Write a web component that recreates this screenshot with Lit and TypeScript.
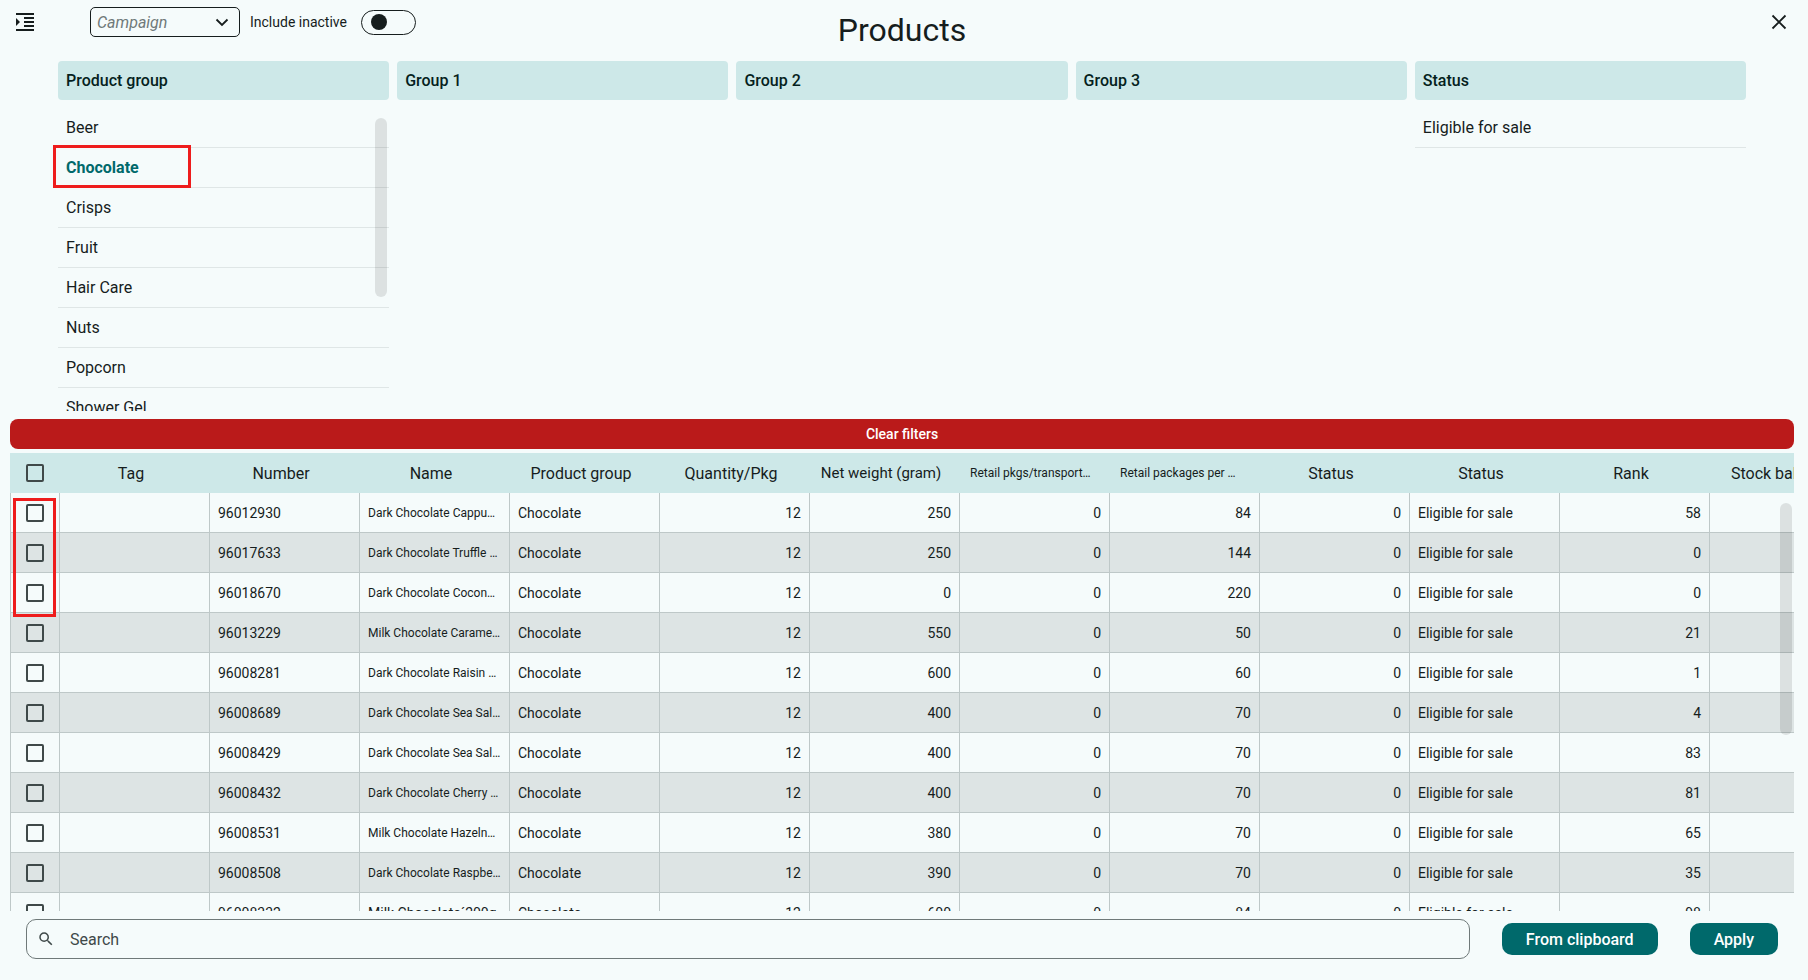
import { LitElement, html, css, svg } from "lit";
import { customElement, state } from "lit/decorators.js";
import { classMap } from "lit/directives/class-map.js";

type Kind = "text" | "number";

interface Column {
  title: string;
  kind: Kind;
  size?: "medium" | "small";
}

const COLUMNS: Column[] = [
  { title: "Tag", kind: "text" },
  { title: "Number", kind: "text" },
  { title: "Name", kind: "text" },
  { title: "Product group", kind: "text" },
  { title: "Quantity/Pkg", kind: "number" },
  { title: "Net weight (gram)", kind: "number", size: "medium" },
  { title: "Retail pkgs/transport…", kind: "number", size: "small" },
  { title: "Retail packages per …", kind: "number", size: "small" },
  { title: "Status", kind: "number" },
  { title: "Status", kind: "text" },
  { title: "Rank", kind: "number" },
  { title: "Stock balance", kind: "number" },
];

/* Longer values than this switch to the small text size. */
const LONG_VALUE = 19;

const product = (num: string, name: string, weight: number, packages: number, rank: number) =>
  ["", num, name, "Chocolate", "12", `${weight}`, "0", `${packages}`, "0", "Eligible for sale", `${rank}`, ""];

const PRODUCTS = [
  product("96012930", "Dark Chocolate Cappu…", 250, 84, 58),
  product("96017633", "Dark Chocolate Truffle …", 250, 144, 0),
  product("96018670", "Dark Chocolate Cocon…", 0, 220, 0),
  product("96013229", "Milk Chocolate Carame…", 550, 50, 21),
  product("96008281", "Dark Chocolate Raisin …", 600, 60, 1),
  product("96008689", "Dark Chocolate Sea Sal…", 400, 70, 4),
  product("96008429", "Dark Chocolate Sea Sal…", 400, 70, 83),
  product("96008432", "Dark Chocolate Cherry …", 400, 70, 81),
  product("96008531", "Milk Chocolate Hazeln…", 380, 70, 65),
  product("96008508", "Dark Chocolate Raspbe…", 390, 70, 35),
  product("96008332", "Milk Chocolate´200g", 600, 84, 98),
];

const FILTERS = [
  {
    title: "Product group",
    options: ["Beer", "Chocolate", "Crisps", "Fruit", "Hair Care", "Nuts", "Popcorn", "Shower Gel"],
  },
  { title: "Group 1", options: [] },
  { title: "Group 2", options: [] },
  { title: "Group 3", options: [] },
  { title: "Status", options: ["Eligible for sale"] },
];

@customElement("app-root")
export class AppRoot extends LitElement {
  @state() private selected = "Chocolate";

  static styles = css`
    :host {
      display: block;
      --surface: #f5fbfb;
      --ink: #161d1d;
      --tint: #cde8e8;
      --primary: #00696b;
      --line: #bec8c8;
      color: var(--ink);
      font-family: Roboto, "Liberation Sans", sans-serif;
      font-size: 16px;
    }
    * {
      box-sizing: border-box;
    }
    button,
    input,
    select {
      font: inherit;
      color: inherit;
      margin: 0;
    }
    button {
      border: 0;
      background: none;
      padding: 0;
      cursor: pointer;
    }
    svg {
      display: block;
      fill: currentColor;
    }
    .page {
      display: flex;
      flex-direction: column;
      height: 100vh;
      min-height: 640px;
      overflow: hidden;
      padding: 0 14px 0 10px;
      background: var(--surface);
    }
    .top {
      display: grid;
      grid-template-columns: 1fr auto 1fr;
      height: 61px;
      flex: none;
    }
    .tools {
      display: flex;
      align-items: center;
      height: 44px;
      padding-left: 3px;
    }
    .campaign {
      position: relative;
      display: block;
      margin-left: 53px;
    }
    .campaign select {
      display: block;
      appearance: none;
      width: 150px;
      height: 30px;
      padding: 0 30px 0 6px;
      border: 1px solid var(--ink);
      border-radius: 5px;
      background: transparent;
      color: #6f7979;
      font-style: italic;
    }
    .campaign svg {
      position: absolute;
      top: 3px;
      right: 6px;
      pointer-events: none;
    }
    .inactive {
      display: flex;
      align-items: center;
      gap: 14px;
      margin-left: 10px;
      font-size: 14px;
      white-space: nowrap;
    }
    .inactive input {
      appearance: none;
      display: flex;
      align-items: center;
      width: 55px;
      height: 25px;
      padding-left: 9px;
      border: 1px solid var(--ink);
      border-radius: 13px;
    }
    .inactive input::before {
      content: "";
      width: 16px;
      height: 16px;
      border-radius: 50%;
      background: var(--ink);
    }
    .inactive input:checked::before {
      margin-left: 20px;
    }
    h1 {
      margin: 0;
      font-size: 32px;
      line-height: 60px;
      font-weight: 400;
    }
    .close {
      justify-self: end;
      align-self: start;
      margin: 10px 3px 0 0;
    }
    .close path,
    .campaign path {
      fill: none;
      stroke: currentColor;
      stroke-width: 1.8;
    }
    .filters {
      display: grid;
      grid-template-columns: repeat(5, 1fr);
      gap: 8px;
      flex: none;
      padding: 0 48px 8px 48px;
    }
    .filter {
      position: relative;
      min-width: 0;
    }
    h2 {
      margin: 0 0 8px;
      padding: 0 8px;
      border-radius: 4px;
      background: var(--tint);
      font-size: 16px;
      line-height: 39px;
      font-weight: 500;
      color: #051f20;
    }
    .options {
      height: 303px;
      margin: 0;
      padding: 0;
      list-style: none;
      overflow: auto;
      scrollbar-width: none;
    }
    .option {
      display: block;
      width: 100%;
      height: 40px;
      padding: 0 8px;
      border-bottom: 1px solid #dfe6e6;
      text-align: left;
    }
    .option.on {
      color: var(--primary);
      font-weight: 700;
    }
    .thumb {
      position: absolute;
      right: 2px;
      width: 12px;
      border-radius: 6px;
      background: rgba(0, 0, 0, 0.1);
      pointer-events: none;
    }
    .filter .thumb {
      top: 57px;
      height: 179px;
    }
    .mark {
      position: absolute;
      border: 3px solid #ee1c1c;
      pointer-events: none;
    }
    .filter .mark {
      left: -5px;
      top: 84px;
      width: 138px;
      height: 43px;
    }
    .clear {
      flex: none;
      height: 30px;
      margin-bottom: 4px;
      border-radius: 8px;
      background: #ba1a1a;
      color: #fff;
      font-size: 14px;
      font-weight: 500;
    }
    .grid {
      position: relative;
      flex: 1;
      min-height: 0;
    }
    .scroll {
      height: 100%;
      overflow: auto;
      scrollbar-width: none;
    }
    .grid .thumb {
      top: 50px;
      height: 232px;
    }
    .grid .mark {
      left: 3px;
      top: 45px;
      width: 43px;
      height: 119px;
    }
    table {
      width: 1850px;
      table-layout: fixed;
      border-collapse: separate;
      border-spacing: 0;
      font-size: 14px;
    }
    .pick {
      width: 50px;
    }
    th {
      position: sticky;
      top: 0;
      height: 40px;
      padding: 0 18px 0 10px;
      background: var(--tint);
      font-size: 16px;
      font-weight: 400;
      white-space: nowrap;
    }
    th.medium {
      font-size: 15px;
    }
    th.small {
      font-size: 12px;
      text-align: left;
    }
    td {
      height: 40px;
      padding: 0 8px;
      border-right: 1px solid var(--line);
      border-bottom: 1px solid var(--line);
      white-space: nowrap;
    }
    tbody tr:nth-child(even) {
      background: #dde4e4;
    }
    td.number {
      text-align: right;
    }
    td.small {
      font-size: 12px;
    }
    th.pick,
    td.pick {
      padding: 0;
    }
    td.pick {
      border-left: 1px solid var(--line);
    }
    .pick input {
      appearance: none;
      display: block;
      width: 18px;
      height: 18px;
      margin: 0 auto;
      border: 2px solid #3f4949;
      border-radius: 2px;
    }
    .pick input:checked {
      background: var(--primary);
      border-color: var(--primary);
    }
    .bottom {
      display: flex;
      align-items: center;
      gap: 32px;
      flex: none;
      padding: 8px 16px 21px;
    }
    .search {
      display: flex;
      align-items: center;
      flex: 1;
      height: 40px;
      padding-left: 10px;
      gap: 15px;
      border: 1px solid #6f7979;
      border-radius: 10px;
      color: #3f4949;
    }
    .search input {
      flex: 1;
      min-width: 0;
      height: 36px;
      padding: 0;
      border: 0;
      outline: 0;
      background: none;
    }
    .search input::placeholder {
      color: #3f4949;
      opacity: 1;
    }
    .action {
      height: 32px;
      padding: 0 24px;
      border-radius: 10px;
      background: var(--primary);
      color: #fff;
      font-weight: 500;
    }
  `;

  private renderFilter(title: string, options: string[]) {
    return html`
      <section class="filter">
        <h2>${title}</h2>
        ${options.length
          ? html`<ul class="options">
              ${options.map(
                (o) => html`<li>
                  <button
                    class=${classMap({ option: true, on: o === this.selected })}
                    @click=${() => (this.selected = o)}
                  >${o}</button>
                </li>`
              )}
            </ul>`
          : null}
        ${options.length > 7 ? html`<div class="thumb"></div><div class="mark"></div>` : null}
      </section>
    `;
  }

  private renderCell(value: string, kind: Kind) {
    const classes = { number: kind === "number", small: value.length > LONG_VALUE };
    return html`<td class=${classMap(classes)}>${value}</td>`;
  }

  render() {
    return html`
      <main class="page">
        <header class="top">
          <div class="tools">
            <button aria-label="Toggle panel">
              <svg width="24" height="24" viewBox="0 0 24 24">
                ${svg`<path d="M3 21h18v-2H3v2zM3 8v8l4-4-4-4zm8 9h10v-2H11v2zM3 3v2h18V3H3zm8 6h10V7H11v2zm0 4h10v-2H11v2z" />`}
              </svg>
            </button>
            <label class="campaign">
              <select aria-label="Campaign">
                <option>Campaign</option>
              </select>
              <svg width="24" height="24" viewBox="0 0 24 24"><path d="M6.5 9.5 12 15l5.500-5.500" /></svg>
            </label>
            <label class="inactive">
              Include inactive
              <input type="checkbox" role="switch" />
            </label>
          </div>
          <h1>Products</h1>
          <button class="close" aria-label="Close">
            <svg width="24" height="24" viewBox="0 0 24 24"><path d="M5.500 5.500l13 13m0-13l-13 13" /></svg>
          </button>
        </header>

        <div class="filters">${FILTERS.map((f) => this.renderFilter(f.title, f.options))}</div>

        <button class="clear">Clear filters</button>

        <div class="grid">
          <div class="scroll">
            <table>
              <thead>
                <tr>
                  <th class="pick"><input type="checkbox" aria-label="Select all" /></th>
                  ${COLUMNS.map((c) => html`<th class=${c.size ?? "large"}>${c.title}</th>`)}
                </tr>
              </thead>
              <tbody>
                ${PRODUCTS.map(
                  (row) => html`<tr>
                    <td class="pick"><input type="checkbox" aria-label=${`Select ${row[1]}`} /></td>
                    ${row.map((value, i) => this.renderCell(value, COLUMNS[i].kind))}
                  </tr>`
                )}
              </tbody>
            </table>
          </div>
          <div class="thumb"></div>
          <div class="mark"></div>
        </div>

        <footer class="bottom">
          <label class="search">
            <svg width="18" height="18" viewBox="0 0 24 24">
              ${svg`<path d="M15.500 14h-.79l-.28-.27A6.470 6.470 0 0 0 16 9.500 6.500 6.500 0 1 0 9.500 16c1.610 0 3.090-.59 4.230-1.570l.27.28v.79l5 4.990L20.490 19l-4.990-5zm-6 0C7.010 14 5 11.990 5 9.500S7.010 5 9.500 5 14 7.010 14 9.500 11.990 14 9.500 14z" />`}
            </svg>
            <input type="text" placeholder="Search" aria-label="Search" />
          </label>
          <button class="action">From clipboard</button>
          <button class="action">Apply</button>
        </footer>
      </main>
    `;
  }
}
